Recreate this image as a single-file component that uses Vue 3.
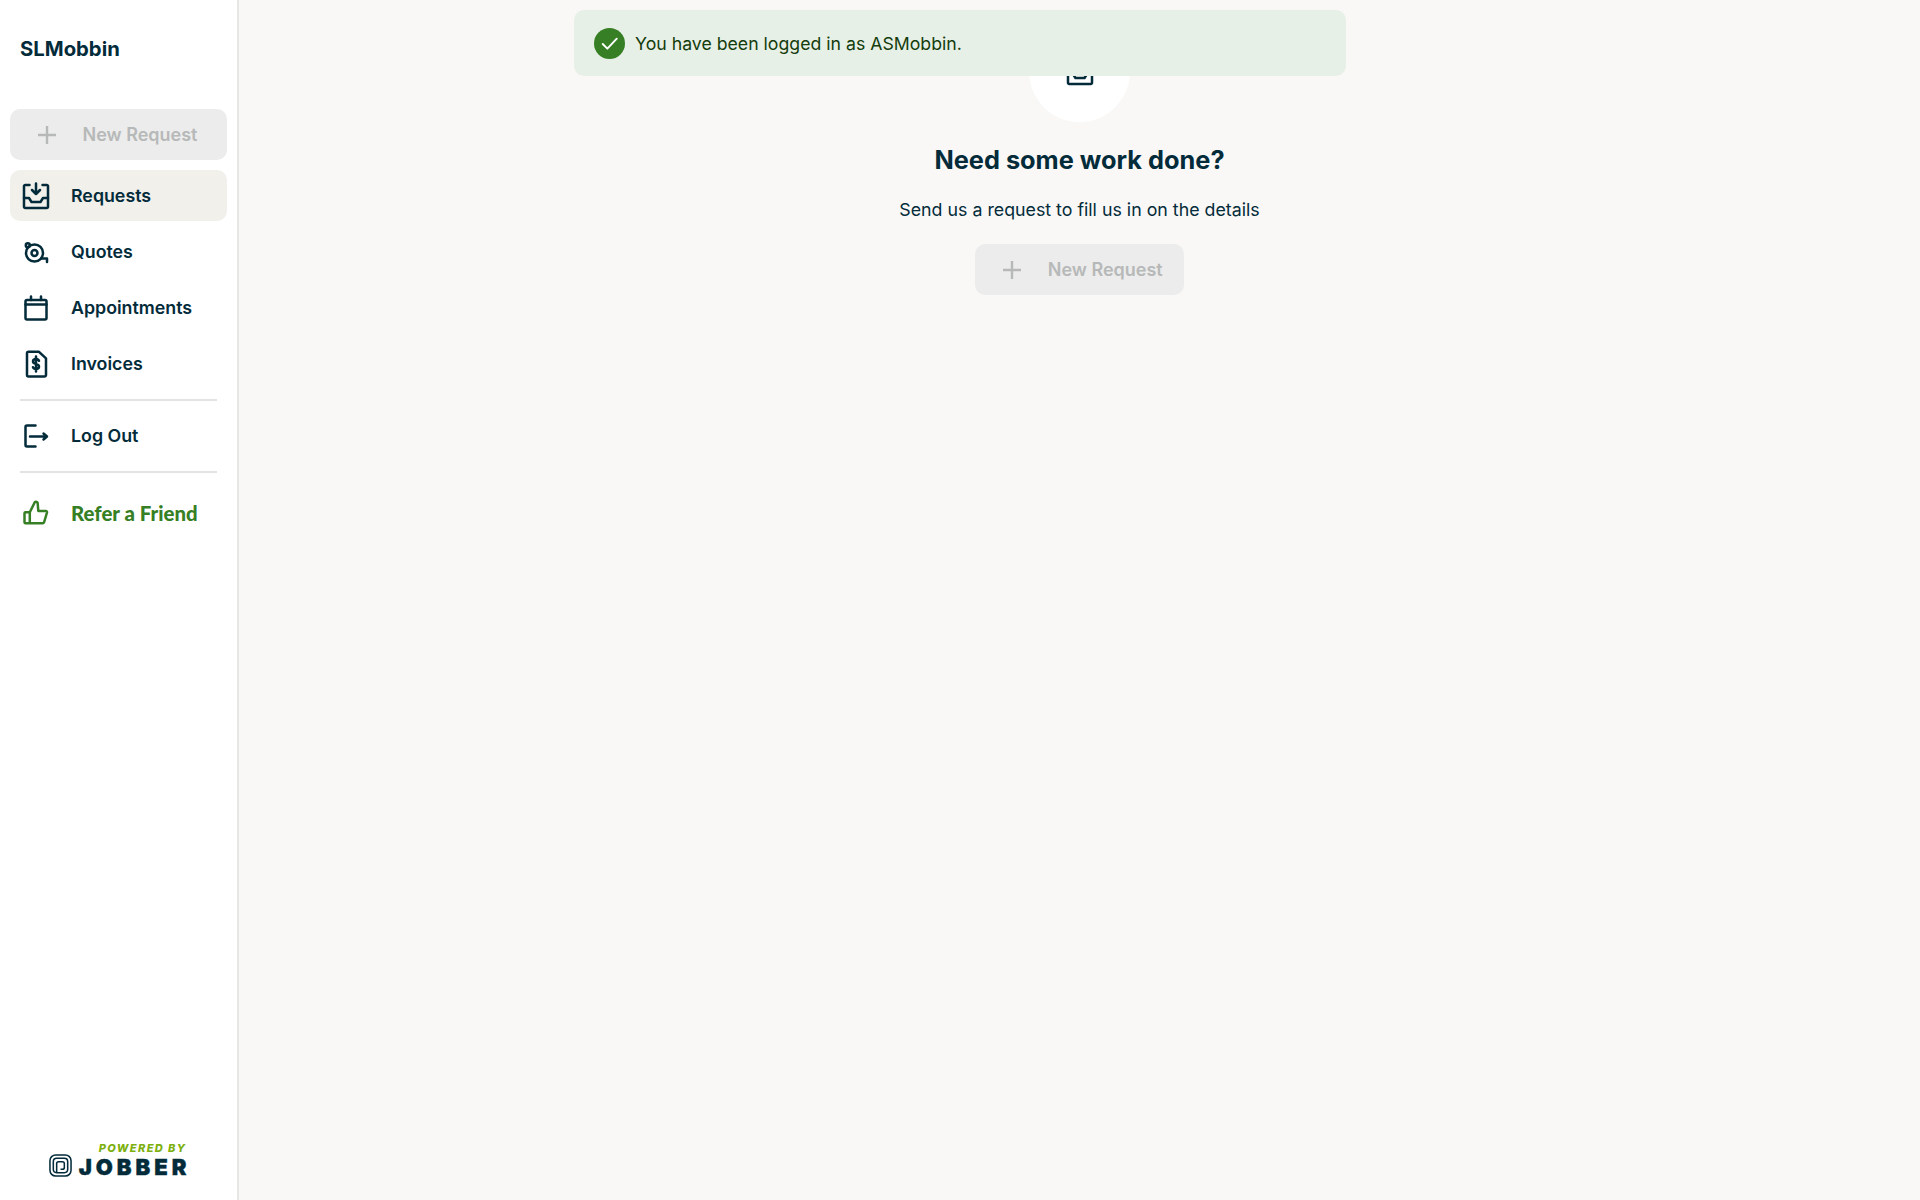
<script setup>
const nav = [
  { label: 'Requests', icon: 'inbox', active: true },
  { label: 'Quotes', icon: 'tape' },
  { label: 'Appointments', icon: 'calendar' },
  { label: 'Invoices', icon: 'invoice' }
]
</script>

<template>
  <div class="page">
    <aside class="sidebar">
      <div class="brand">SLMobbin</div>
      <nav class="nav">
        <button class="new-btn wide" type="button">
          <svg class="plus" viewBox="0 0 24 24"><path d="M12 3v18M3 12h18" /></svg>
          <span>New Request</span>
        </button>
        <a v-for="item in nav" :key="item.label" class="nav-item" :class="{ active: item.active }">
          <svg class="ico" viewBox="0 0 30 30">
            <template v-if="item.icon === 'inbox'">
              <path d="M8.500 4H4.200A1.200 1.200 0 0 0 3 5.200v20.600A1.200 1.200 0 0 0 4.200 27h21.600a1.200 1.200 0 0 0 1.200-1.200V5.200A1.200 1.200 0 0 0 25.800 4h-4.300" />
              <path d="M15 2.500v10.500M11 9l4 4 4-4" />
              <path d="M3 17h5l2.500 4h9L22 17h5" />
            </template>
            <template v-else-if="item.icon === 'tape'">
              <circle cx="13.500" cy="16" r="8.500" />
              <path d="M20 21.500h6v3.500" />
              <circle cx="13.500" cy="16" r="3" />
              <circle cx="6.800" cy="8.300" r="2" />
            </template>
            <template v-else-if="item.icon === 'calendar'">
              <rect x="4.500" y="7" width="21" height="19.500" rx="1.500" />
              <path d="M4.500 11.500h21M10 3.500V7M20 3.500V7" />
            </template>
            <template v-else>
              <path d="M7.500 2.800h10.500l7 6.500v16.700a1.500 1.500 0 0 1-1.500 1.500h-16A1.500 1.500 0 0 1 6 26V4.300a1.500 1.500 0 0 1 1.500-1.500Z" />
              <path d="M18 11.800c-.4-1.200-1.500-1.800-3-1.800-1.800 0-3 1-3 2.500 0 3.300 6 1.700 6 5 0 1.500-1.200 2.500-3 2.500-1.500 0-2.600-.6-3-1.800M15 7.500v15" />
            </template>
          </svg>
          <span>{{ item.label }}</span>
        </a>
        <hr class="rule" />
        <a class="nav-item">
          <svg class="ico" viewBox="0 0 30 30">
            <path d="M14.500 4.500H6A1.500 1.500 0 0 0 4.500 6v18A1.500 1.500 0 0 0 6 25.500h8.500" />
            <path d="M9 15.500h16.500M22.500 12.500l3.500 3-3.500 3" />
          </svg>
          <span>Log Out</span>
        </a>
        <hr class="rule" />
        <a class="nav-item refer">
          <svg class="ico" viewBox="0 0 30 30">
            <path d="M8.800 14.300H4.500a1 1 0 0 0-1 1v9a1 1 0 0 0 1 1h4.300m0-11V25.300h13l1.200-.8 3-10a1.200 1.200 0 0 0-1.200-1.500h-7.500l-.6-7.500c-.1-1-1-1.700-2-1.700-.7 0-1 .3-1.200 1Z" />
          </svg>
          <span>Refer a Friend</span>
        </a>
      </nav>
      <div class="powered">
        <svg class="logo" viewBox="0 0 24 24">
          <rect x="1" y="1" width="22" height="22" rx="6" />
          <rect x="4.500" y="4.500" width="15" height="15" rx="3.500" />
          <path d="M8 19V10a2 2 0 0 1 2-2h4a2 2 0 0 1 2 2v4a2 2 0 0 1-2 2h-2" />
        </svg>
        <div class="wordmark">
          <span class="by">POWERED BY</span>
          <span class="jobber">JOBBER</span>
        </div>
      </div>
    </aside>

    <main class="main">
      <div class="toast">
        <span class="check">
          <svg viewBox="0 0 32 32"><path d="M9 16.500l4.800 4.800L23.500 11" /></svg>
        </span>
        <span>You have been logged in as ASMobbin.</span>
      </div>
      <div class="circle">
        <svg class="circle-ico" viewBox="0 0 30 30">
          <path d="M8.500 4H4.200A1.200 1.200 0 0 0 3 5.200v20.600A1.200 1.200 0 0 0 4.200 27h21.600a1.200 1.200 0 0 0 1.200-1.200V5.200A1.200 1.200 0 0 0 25.800 4h-4.300" />
          <path d="M3 17h5l2.500 4h9L22 17h5" />
        </svg>
      </div>
      <h1 class="title">Need some work done?</h1>
      <p class="sub">Send us a request to fill us in on the details</p>
      <button class="new-btn" type="button">
        <svg class="plus" viewBox="0 0 24 24"><path d="M12 3v18M3 12h18" /></svg>
        <span>New Request</span>
      </button>
    </main>
  </div>
</template>

<style>
html, body { margin: 0; background: #f9f8f6; }
</style>

<style scoped>
.page {
  display: flex;
  height: 1200px;
  overflow: hidden;
  font-family: Inter, "Liberation Sans", sans-serif;
  color: #032b3a;
  background: #f9f8f6;
}
.sidebar {
  box-sizing: border-box;
  width: 239px;
  flex: none;
  display: flex;
  flex-direction: column;
  background: #fff;
  border-right: 2px solid #e6e6e4;
  padding: 0 10px;
}
.brand {
  margin: 35px 0 0 10px;
  font-size: 20.300px;
  line-height: 28px;
  font-weight: 700;
}
.nav {
  margin-top: 46px;
  display: flex;
  flex-direction: column;
  flex: 1;
}
.new-btn {
  display: inline-flex;
  align-items: center;
  justify-content: flex-start;
  gap: 23.500px;
  height: 51px;
  padding: 0 21px 0 25px;
  border: 0;
  border-radius: 10px;
  background: #ececec;
  color: #b7b9b9;
  font: 600 18px Inter, "Liberation Sans", sans-serif;
}
.new-btn.wide {
  width: 217px;
  margin-bottom: 10px;
  flex: none;
}
.plus {
  width: 24px;
  height: 24px;
  flex: none;
  fill: none;
  stroke: #b7b9b9;
  stroke-width: 2.400;
}
.nav-item {
  display: flex;
  align-items: center;
  gap: 20.500px;
  height: 51px;
  margin-bottom: 5px;
  padding: 0 10px 0 10.500px;
  border-radius: 10px;
  font-size: 17.800px;
  font-weight: 600;
  color: #032b3a;
}
.nav-item.active {
  background: #f1f0eb;
}
.ico {
  width: 30px;
  height: 30px;
  flex: none;
  fill: none;
  stroke: #032b3a;
  stroke-width: 2.500;
  stroke-linecap: round;
  stroke-linejoin: round;
}
.rule {
  width: 197px;
  margin: 4.500px 0 9.500px 10px;
  border: 0;
  border-top: 2px solid #e3e3e3;
}
.nav-item.refer {
  margin-top: 5px;
  color: #367f24;
  font-family: Lato, sans-serif;
  font-weight: 900;
  font-size: 20.400px;
}
.refer .ico { stroke: #367f24; }
.powered {
  display: flex;
  align-items: flex-end;
  justify-content: center;
  gap: 7px;
  padding: 0 2px 23.500px 0;
}
.logo {
  width: 23px;
  height: 23px;
  flex: none;
  fill: none;
  stroke: #032b3a;
  stroke-width: 1.600;
}
.wordmark {
  display: flex;
  flex-direction: column;
  align-items: flex-end;
  margin-right: -4px;
}
.by {
  margin: 0 4px 2.500px 0;
  font: italic 800 11px/14px Inter, sans-serif;
  letter-spacing: 1.400px;
  color: #7db00e;
}
.jobber {
  font: 900 22px/19px Inter, sans-serif;
  letter-spacing: 4px;
  color: #032b3a;
  -webkit-text-stroke: 0.400px #032b3a;
}
.main {
  position: relative;
  flex: 1;
  display: flex;
  flex-direction: column;
  align-items: center;
  padding-top: 21px;
}
.toast {
  position: absolute;
  top: 10px;
  left: 335px;
  box-sizing: border-box;
  width: 772px;
  height: 66px;
  display: flex;
  align-items: center;
  gap: 10px;
  padding-left: 20px;
  border-radius: 10px;
  background: #e7f0e6;
  color: #143c0c;
  font-size: 17.700px;
}
.check {
  width: 31px;
  height: 31px;
  border-radius: 50%;
  background: #367f24;
  display: flex;
}
.check svg {
  width: 31px;
  height: 31px;
  fill: none;
  stroke: #fff;
  stroke-width: 2;
  stroke-linecap: round;
  stroke-linejoin: round;
}
.circle {
  width: 101px;
  height: 101px;
  border-radius: 50%;
  background: #fff;
  display: flex;
  align-items: center;
  justify-content: center;
}
.circle-ico {
  width: 30px;
  height: 30px;
  fill: none;
  stroke: #032b3a;
  stroke-width: 2.500;
  stroke-linecap: round;
  stroke-linejoin: round;
}
.title {
  margin: 20px 0 0;
  font-size: 25.350px;
  line-height: 36px;
  font-weight: 700;
}
.sub {
  margin: 19px 0 0;
  font-size: 17.800px;
  line-height: 26px;
}
.main .new-btn {
  margin-top: 21px;
}
</style>
